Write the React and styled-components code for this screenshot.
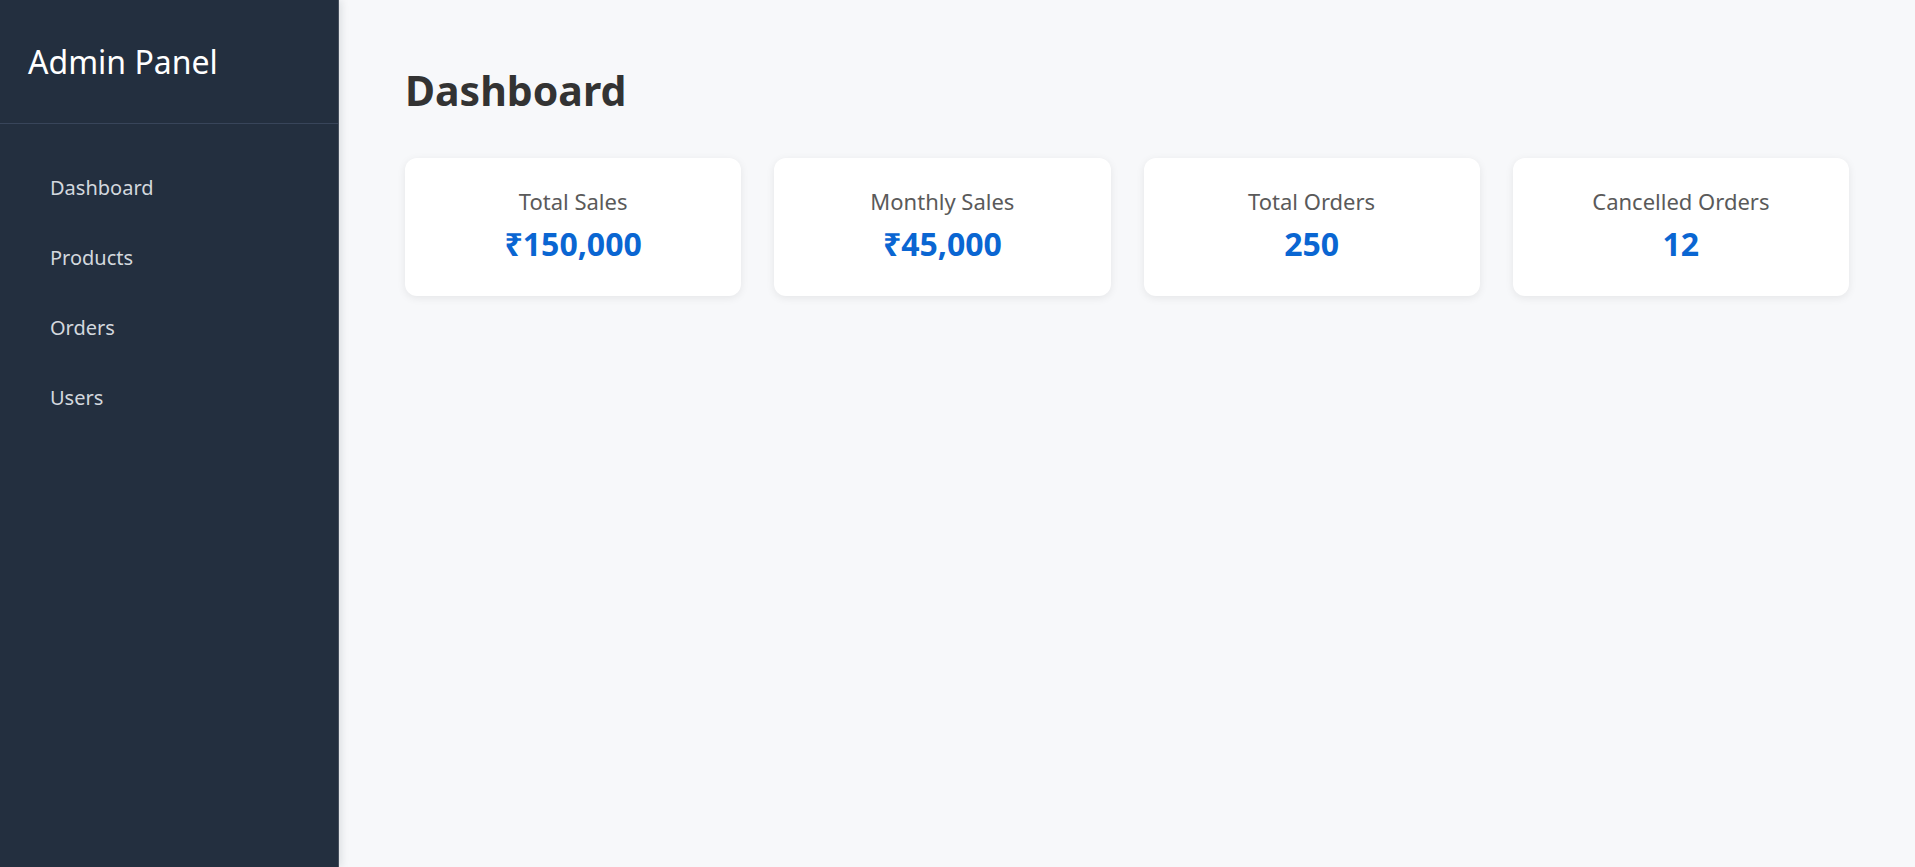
import React from "react";
import styled, { createGlobalStyle } from "styled-components";

const GlobalStyle = createGlobalStyle`
  html, body {
    margin: 0;
    padding: 0;
    height: 100%;
  }
  body {
    font-family: "Noto Sans", "Open Sans", sans-serif;
    background: #f7f8fa;
  }
  #root {
    min-height: 100vh;
  }
`;

const Layout = styled.div`
  display: flex;
  min-height: 100vh;
`;

const Sidebar = styled.aside`
  width: 338px;
  flex-shrink: 0;
  background: #232f3f;
  border-right: 1px solid #46505e;
  box-shadow: 2px 0 8px rgba(20, 30, 45, 0.12);
  position: relative;
  z-index: 1;
`;

const Brand = styled.div`
  height: 124px;
  display: flex;
  align-items: center;
  padding: 0 28px;
  border-bottom: 1px solid #38455a;
  color: #ffffff;
  font-size: 32px;
  font-weight: 400;
  box-sizing: border-box;
`;

const Nav = styled.nav`
  display: flex;
  flex-direction: column;
  padding: 29px 0 0 50px;
`;

const NavItem = styled.a`
  display: block;
  height: 70px;
  line-height: 70px;
  color: #d3d8de;
  font-size: 20px;
  text-decoration: none;
  cursor: pointer;
`;

const Main = styled.main`
  flex: 1;
  padding: 66px 66px;
  background: #f7f8fa;
`;

const Title = styled.h1`
  margin: 0 0 44px;
  font-size: 41px;
  line-height: 48px;
  font-weight: 700;
  color: #333333;
`;

const Stats = styled.div`
  display: grid;
  grid-template-columns: repeat(4, 1fr);
  gap: 33px;
`;

const Card = styled.div`
  background: #ffffff;
  border-radius: 12px;
  box-shadow: 0 2px 8px rgba(0, 0, 0, 0.08);
  padding: 28px 20px 31px;
  text-align: center;
`;

const Label = styled.div`
  font-size: 22px;
  line-height: 30px;
  color: #5a5a5a;
`;

const Value = styled.div`
  margin-top: 7px;
  font-size: 32px;
  line-height: 42px;
  font-weight: 700;
  color: #0a66d2;
`;

const navLinks = ["Dashboard", "Products", "Orders", "Users"];

const stats = [
  { label: "Total Sales", value: "₹150,000" },
  { label: "Monthly Sales", value: "₹45,000" },
  { label: "Total Orders", value: "250" },
  { label: "Cancelled Orders", value: "12" },
];

export default function App() {
  return (
    <>
      <GlobalStyle />
      <Layout>
        <Sidebar>
          <Brand>Admin Panel</Brand>
          <Nav>
            {navLinks.map(link => (
              <NavItem key={link}>{link}</NavItem>
            ))}
          </Nav>
        </Sidebar>
        <Main>
          <Title>Dashboard</Title>
          <Stats>
            {stats.map(s => (
              <Card key={s.label}>
                <Label>{s.label}</Label>
                <Value>{s.value}</Value>
              </Card>
            ))}
          </Stats>
        </Main>
      </Layout>
    </>
  );
}
